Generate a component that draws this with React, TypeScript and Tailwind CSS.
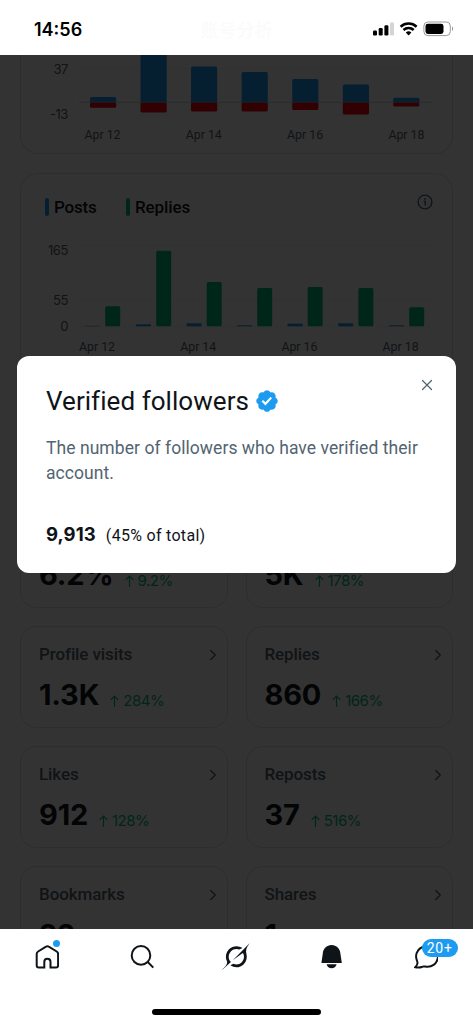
import { ChevronRight, X } from "lucide-react";

const growth = [
  { x: 90, top: 97, bottom: 107.8 },
  { x: 140.5, top: 40, bottom: 112.6 },
  { x: 191, top: 66.4, bottom: 111.6 },
  { x: 241.6, top: 72, bottom: 111.6 },
  { x: 292.2, top: 79, bottom: 110 },
  { x: 342.8, top: 84.6, bottom: 114.5 },
  { x: 393.2, top: 97.8, bottom: 106.4 },
];

const activity = [
  { x: 85, posts: 0.5, replies: 20 },
  { x: 136, posts: 2, replies: 75.6 },
  { x: 186.5, posts: 3, replies: 44.4 },
  { x: 237, posts: 1, replies: 38.4 },
  { x: 287.5, posts: 2.6, replies: 39.4 },
  { x: 338.2, posts: 3, replies: 38.4 },
  { x: 389, posts: 1, replies: 19 },
];

const stats = [
  { label: "", value: "6.2%", change: "9.2%" },
  { label: "", value: "5K", change: "178%" },
  { label: "Profile visits", value: "1.3K", change: "284%" },
  { label: "Replies", value: "860", change: "166%" },
  { label: "Likes", value: "912", change: "128%" },
  { label: "Reposts", value: "37", change: "516%" },
  { label: "Bookmarks", value: "22", change: "" },
  { label: "Shares", value: "1", change: "" },
];

const days = ["Apr 12", "Apr 14", "Apr 16", "Apr 18"];

const StatusBar = () => (
  <header className="flex h-[55px] shrink-0 items-center bg-white pt-[3px]">
    <div className="flex w-[180px] items-center pl-[34px] font-['Inter'] text-[18px] font-semibold text-black">
      14:56
    </div>
    <div className="w-[113px] text-center font-['Noto_Sans_CJK_SC',sans-serif] text-[18px] font-medium text-[#fbfbfb]">
      账号分析
    </div>
    <svg className="ml-20 h-4 w-[82px]" viewBox="0 0 82 16">
      <rect x="0" y="9.5" width="4" height="5" rx="1.2" />
      <rect x="5.7" y="7" width="4" height="7.5" rx="1.2" />
      <rect x="11.4" y="4.3" width="4" height="10.2" rx="1.2" />
      <rect x="17" y="1.5" width="4" height="13" rx="1.2" fill="#d4d4d4" />
      <g fill="none" stroke="#000" strokeWidth="2.6">
        <path d="M27.6 5.7a11.8 11.8 0 0 1 16 0" />
        <path d="M30.5 9a7.5 7.5 0 0 1 10.2 0" />
      </g>
      <path d="M32.8 11.5a4.3 4.3 0 0 1 5.6 0l-2.8 3z" />
      <rect x="50.9" y="1" width="26.4" height="13.6" rx="4" fill="none" stroke="#999" />
      <rect x="52.5" y="2.7" width="18" height="10.2" rx="2.4" />
      <path d="M79 5.5v4.6c1.5-.5 1.5-4.1 0-4.6z" fill="#999" />
    </svg>
  </header>
);

const GrowthChart = () => (
  <svg className="block h-[98px] w-[431px] text-[13px]" viewBox="21 55 431 98">
    <path d="M79 68.5h353M79 115h353" stroke="#eff3f4" />
    {growth.map((bar) => (
      <g key={bar.x}>
        <rect x={bar.x} y={bar.top} width="26.2" height={102.3 - bar.top + 1} rx="1.5" fill="#1d9bf0" />
        <rect x={bar.x} y="102.3" width="26.2" height={bar.bottom - 102.3} rx="1.5" fill="#f4000e" />
      </g>
    ))}
    <path d="M79 102.3h353" stroke="#aab8c2" strokeOpacity="0.6" />
    <g className="font-['Inter'] tracking-[-0.4px]" fill="#536471" textAnchor="end">
      <text x="68" y="74.2">37</text>
      <text x="68" y="119">-13</text>
    </g>
    <g className="font-['Roboto']" fill="#536471" textAnchor="middle">
      {days.map((day, i) => (
        <text key={day} x={102.5 + i * 101.3} y="139.3" textLength="36" lengthAdjust="spacingAndGlyphs">
          {day}
        </text>
      ))}
    </g>
  </svg>
);

const ActivityChart = () => (
  <svg className="block h-[120px] w-[431px] text-[13px]" viewBox="21 240 431 120">
    <path d="M79 245.5h353M79 300.5h353M79 326.5h353" stroke="#eff3f4" />
    {activity.map((bar) => (
      <g key={bar.x}>
        <rect x={bar.x} y={326.3 - bar.posts} width="15" height={bar.posts} fill="#1d9bf0" />
        <rect x={bar.x + 20.2} y={326.3 - bar.replies} width="15" height={bar.replies} rx="1.5" fill="#00ba7c" />
      </g>
    ))}
    <g className="font-['Inter'] tracking-[-0.4px]" fill="#536471" textAnchor="end">
      <text x="68" y="254.5">165</text>
      <text x="68" y="304.5">55</text>
      <text x="68" y="330.8">0</text>
    </g>
    <g className="font-['Roboto']" fill="#536471" textAnchor="middle">
      {days.map((day, i) => (
        <text key={day} x={97 + i * 101.2} y="351" textLength="36" lengthAdjust="spacingAndGlyphs">
          {day}
        </text>
      ))}
    </g>
  </svg>
);

const Legend = () => (
  <div className="flex h-[66px] items-start pr-[19px] pl-6 text-[17px] leading-5 font-medium text-[#0f1419]">
    <div className="mt-[23px] flex w-[81px] items-center gap-[5px]">
      <span className="h-[18px] w-1 rounded-sm bg-[#1d9bf0]" />
      <span className="tracking-[-0.2px]">Posts</span>
    </div>
    <div className="mt-[23px] flex items-center gap-[5px]">
      <span className="h-[18px] w-1 rounded-sm bg-[#00ba7c]" />
      <span className="tracking-[-0.1px]">Replies</span>
    </div>
    <svg className="mt-5 ml-auto h-4 w-4" viewBox="0 0 16 16" fill="none" stroke="#536471" strokeWidth="1.4">
      <circle cx="8" cy="8" r="6.9" />
      <path d="M6.6 7.4h1.6v4.2" />
      <circle cx="8" cy="4.9" r=".3" />
    </svg>
  </div>
);

const StatCard = ({ label, value, change }) => (
  <div className="h-[102px] rounded-2xl border border-[#d8e0e5] pt-[18px] pr-[5px] pl-[18px]">
    <div className="flex h-5 items-center justify-between text-[17px] font-medium tracking-[-0.1px] text-[#536471]">
      <span>{label}</span>
      {label && <ChevronRight size={18} strokeWidth={1.8} />}
    </div>
    <div className="mt-2 flex items-end font-['Inter']">
      <span className="text-[29px] leading-[44px] font-bold tracking-[-0.2px] text-[#0f1419]">{value}</span>
      {change && (
        <span className="mb-[6px] ml-[11px] flex h-5 items-center gap-1 text-[15px] tracking-[-0.5px] text-[#00ba7c]">
          <svg className="h-3 w-[9px]" viewBox="0 0 9 12" fill="none" stroke="currentColor" strokeWidth="1.2">
            <path d="M4.5 12V1M.7 4.8L4.5 1l3.8 3.8" />
          </svg>
          {change}
        </span>
      )}
    </div>
  </div>
);

const VerifiedDialog = () => (
  <div className="absolute top-[301px] left-[17px] h-[217px] w-[439px] rounded-xl bg-white pt-[29px] pl-[29px]">
    <button className="absolute top-5 right-5 text-[#536471]">
      <X size={18} strokeWidth={1.6} />
    </button>
    <h2 className="flex h-8 items-center gap-[7px] text-[26px] tracking-[0.05px] text-[#0f1419]">
      Verified followers
      <svg className="h-[22px] w-[22px]" viewBox="1.5 1.5 21 21" fill="#1d9bf0">
        <path d="M22.25 12c0-1.43-.88-2.67-2.19-3.34.46-1.39.2-2.9-.81-3.91s-2.52-1.27-3.91-.81c-.66-1.31-1.91-2.19-3.34-2.19s-2.67.88-3.33 2.19c-1.4-.46-2.91-.2-3.92.81s-1.26 2.52-.8 3.91c-1.31.67-2.2 1.91-2.2 3.34s.89 2.67 2.2 3.34c-.46 1.39-.21 2.9.8 3.91s2.52 1.26 3.91.81c.67 1.31 1.91 2.19 3.34 2.19s2.68-.88 3.34-2.19c1.39.45 2.9.2 3.91-.81s1.27-2.52.81-3.91c1.31-.67 2.19-1.91 2.19-3.34zm-11.71 4.2L6.8 12.46l1.41-1.42 2.26 2.26 4.8-5.23 1.47 1.36-6.2 6.77z" />
      </svg>
    </h2>
    <p className="mt-[19px] text-[17.5px] leading-[25px] tracking-[0.06px] text-[#536471]">
      The number of followers who have verified their
      <br />
      account.
    </p>
    <div className="mt-[34px] flex items-baseline gap-2.5 text-[#0f1419]">
      <span className="font-['Inter'] text-[18.5px] leading-7 font-bold tracking-[0.1px]">9,913</span>
      <span className="text-[16px] tracking-[0.3px]">(45% of total)</span>
    </div>
  </div>
);

const TabBar = () => (
  <nav className="flex h-[95px] shrink-0 flex-col items-center bg-white text-[#0f1419]">
    <div className="grid w-full grid-cols-5 justify-items-center pt-[13px]">
      <div className="relative h-[30px] w-[30px]">
        <svg className="mt-[3px] ml-[3px] h-6 w-6" viewBox="-.4 0 24 24" fill="none" stroke="currentColor" strokeWidth="2">
          <path d="M3.3 22.5h5.6v-5.6a3.1 3.1 0 0 1 6.2 0v5.6h5.6a2 2 0 0 0 2-2V9a3 3 0 0 0-1.4-2.5L13.4 1.7a2.6 2.6 0 0 0-2.8 0L2.7 6.5A3 3 0 0 0 1.3 9v11.5a2 2 0 0 0 2 2z" />
        </svg>
        <span className="absolute -top-[2px] right-[2px] h-[7px] w-[7px] rounded-full bg-[#1d9bf0]" />
      </div>
      <svg className="mt-[3px] h-6 w-6" viewBox="0 0 24 24" fill="none" stroke="currentColor" strokeWidth="2">
        <circle cx="11" cy="10.4" r="9.3" />
        <path d="M17.5 16.8l5.8 5.8" />
      </svg>
      <svg className="mt-px h-[27px] w-7" viewBox="0 0 33 32" fill="currentColor">
        <path d="M12.745 20.54l10.97-8.19c.539-.4 1.307-.244 1.564.38 1.349 3.288.746 7.241-1.938 9.955-2.683 2.714-6.417 3.31-9.83 1.954l-3.728 1.745c5.347 3.697 11.84 2.782 15.898-1.324 3.219-3.255 4.216-7.692 3.284-11.693l.008.009c-1.351-5.878.332-8.227 3.782-13.031L33 0l-4.54 4.59v-.014L12.743 20.544m-2.263 1.987c-3.837-3.707-3.175-9.446.1-12.755 2.42-2.449 6.388-3.448 9.852-1.979l3.72-1.737c-.67-.49-1.53-1.017-2.515-1.387-4.455-1.854-9.789-.931-13.41 2.728-3.483 3.523-4.579 8.94-2.697 13.561 1.405 3.454-.899 5.898-3.22 8.364C1.49 30.2.666 31.074 0 32l10.478-9.466" />
      </svg>
      <svg className="mt-[3px] h-6 w-6" viewBox="-.6 0 24 24" fill="currentColor">
        <path d="M12 0c-4.9 0-8.6 3.7-8.8 8.6L1.8 17.9h20.4L20.8 8.6C20.6 3.7 16.9 0 12 0z" />
        <path d="M7 19.2h10c-.6 2.4-2.6 4-5 4s-4.4-1.6-5-4z" />
      </svg>
      <div className="relative h-[30px] w-6">
        <svg className="mt-[3px] h-6 w-6" viewBox="0 0 24 24" fill="none" stroke="currentColor" strokeWidth="2">
          <path d="M13 1.2a10.3 10.3 0 1 1-1.8 20.3c-1-.2-1.8-.2-2.7.2-2.2.8-4.6 1-7.2.5 1.3-1.3 2.2-2.7 2.2-4.2 0-1-.4-1.9-.7-2.9A10.3 10.3 0 0 1 13 1.2z" />
        </svg>
        <span className="absolute -top-[3px] left-2 flex h-[18px] w-9 items-center justify-center rounded-full bg-[#1d9bf0] text-[14px] tracking-[0.8px] text-white">
          20+
        </span>
      </div>
    </div>
    <div className="mt-[37px] h-[6px] w-[169px] rounded-full bg-black" />
  </nav>
);

const App = () => {
  return (
    <div className="flex h-[1024px] w-[473px] flex-col overflow-hidden bg-white font-['Roboto',sans-serif]">
      <StatusBar />
      <main className="relative h-[874px] shrink-0 overflow-hidden">
        <div className="px-5">
          <section className="rounded-b-[18px] border border-t-0 border-[#d8e0e5]">
            <GrowthChart />
          </section>
          <section className="mt-[19px] h-[240px] rounded-[18px] border border-[#d8e0e5]">
            <Legend />
            <ActivityChart />
          </section>
          <div className="mt-[93px] grid grid-cols-2 gap-[18px]">
            {stats.map((stat) => (
              <StatCard key={stat.value} {...stat} />
            ))}
          </div>
        </div>
        <div className="absolute inset-0 bg-black/80" />
        <VerifiedDialog />
      </main>
      <TabBar />
    </div>
  );
};

export default App;
